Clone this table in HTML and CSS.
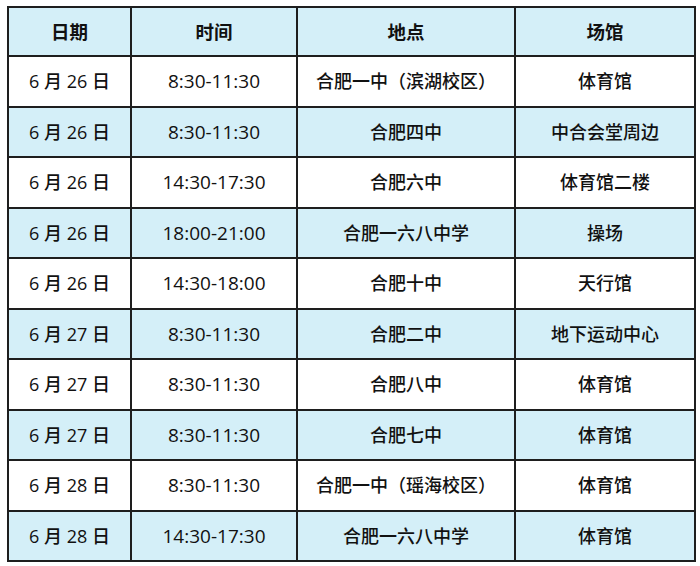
FILE: index.html
```html
<!DOCTYPE html>
<html lang="zh-CN">
<head>
<meta charset="utf-8">
<link rel="stylesheet" href="styles.css">
</head>
<body>
<table class="sched">
  <colgroup>
    <col class="c1"><col class="c2"><col class="c3"><col class="c4">
  </colgroup>
  <thead>
    <tr class="head"><th>日期</th><th>时间</th><th>地点</th><th>场馆</th></tr>
  </thead>
  <tbody>
    <tr><td>6 月 26 日</td><td>8:30-11:30</td><td>合肥一中（滨湖校区）</td><td>体育馆</td></tr>
    <tr class="alt"><td>6 月 26 日</td><td>8:30-11:30</td><td>合肥四中</td><td>中合会堂周边</td></tr>
    <tr><td>6 月 26 日</td><td>14:30-17:30</td><td>合肥六中</td><td>体育馆二楼</td></tr>
    <tr class="alt"><td>6 月 26 日</td><td>18:00-21:00</td><td>合肥一六八中学</td><td>操场</td></tr>
    <tr><td>6 月 26 日</td><td>14:30-18:00</td><td>合肥十中</td><td>天行馆</td></tr>
    <tr class="alt"><td>6 月 27 日</td><td>8:30-11:30</td><td>合肥二中</td><td>地下运动中心</td></tr>
    <tr><td>6 月 27 日</td><td>8:30-11:30</td><td>合肥八中</td><td>体育馆</td></tr>
    <tr class="alt"><td>6 月 27 日</td><td>8:30-11:30</td><td>合肥七中</td><td>体育馆</td></tr>
    <tr><td>6 月 28 日</td><td>8:30-11:30</td><td>合肥一中（瑶海校区）</td><td>体育馆</td></tr>
    <tr class="alt"><td>6 月 28 日</td><td>14:30-17:30</td><td>合肥一六八中学</td><td>体育馆</td></tr>
  </tbody>
</table>
</body>
</html>
```
FILE: styles.css
```css
html, body {
  margin: 0;
  padding: 0;
  background: #ffffff;
}
body {
  padding: 6px 0 0 7px;
  font-family: "Open Sans", "Noto Sans CJK SC", sans-serif;
  color: #111111;
}
.sched {
  border-collapse: collapse;
  width: 687px;
  table-layout: fixed;
  border: 2px solid #1e1e1e;
}
.c1 { width: 123px; }
.c2 { width: 166px; }
.c3 { width: 218px; }
.c4 { width: 180px; }
.sched th, .sched td {
  border: 2px solid #1e1e1e;
  text-align: center;
  vertical-align: middle;
  padding: 0;
  font-size: 18px;
  line-height: 22px;
  font-weight: 500;
}
.sched td:nth-child(2) {
  font-size: 19px;
}
.sched th {
  font-weight: 700;
  font-size: 18.5px;
}
.head {
  height: 49px;
  background: #d4eff8;
}
.sched tbody tr {
  height: 50.5px;
}
.alt {
  background: #d4eff8;
}
```
